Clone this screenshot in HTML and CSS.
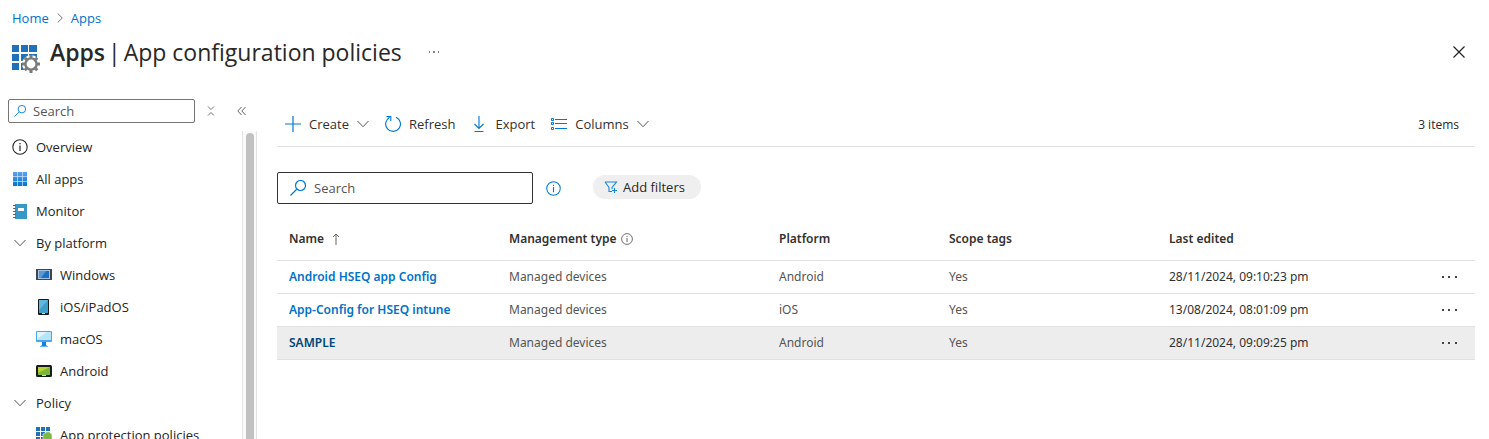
FILE: index.html
```html
<!DOCTYPE html>
<html lang="en">
<head>
<meta charset="utf-8">
<meta name="viewport" content="width=device-width, initial-scale=1">
<title>Apps | App configuration policies</title>
<link rel="stylesheet" href="styles.css">
</head>
<body>
<svg class="sprite" width="0" height="0" aria-hidden="true">
  <symbol id="chevron" viewBox="0 0 12 12"><path d="M.5 3 6 8.700 11.500 3" fill="none" stroke="currentColor"/></symbol>
  <symbol id="search" viewBox="0 0 16 16"><path d="M6.500 9.500.5 15.500M10.500.5a5 5 0 1 1 0 10 5 5 0 0 1 0-10z" fill="none" stroke="currentColor" stroke-width="1.200"/></symbol>
  <symbol id="info" viewBox="0 0 16 16"><circle cx="8" cy="8" r="7.200" fill="none" stroke="currentColor" stroke-width="1.100"/><path d="M8 6.500v5.500M8 4v1.200" fill="none" stroke="currentColor" stroke-width="1.200"/></symbol>
  <symbol id="dots" viewBox="0 0 16 4"><path d="M1 1h2v2H1zM7 1h2v2H7zM14 1h2v2h-2z" fill="currentColor"/></symbol>
</svg>

<header class="header">
  <nav class="breadcrumb" aria-label="Breadcrumb">
    <a href="#">Home</a>
    <svg class="crumb-sep" viewBox="0 0 6 10" aria-hidden="true"><path d="M.7.5 5.300 5 .7 9.500" fill="none" stroke="currentColor"/></svg>
    <a href="#">Apps</a>
  </nav>
  <div class="titlebar">
    <svg class="title-icon" viewBox="0 0 28 28" aria-hidden="true">
      <path fill="#1f72b8" d="M0 0h7v7H0zM9 0h7v7H9zM17 0h8v7h-8zM0 9h7v7H0zM9 9h7v7H9zM17 9h8v7h-8zM0 18h7v7H0zM9 18h7v7H9z"/>
      <circle cx="19" cy="19" r="9" fill="#fff"/>
      <circle cx="19" cy="19" r="5.600" fill="#fff" stroke="#7b7b7b" stroke-width="2.400"/>
      <g stroke="#7b7b7b" stroke-width="3"><path d="M19 10v3M19 25v3M10 19h3M25 19h3M12.700 12.700l2.100 2.100M23.200 23.200l2.100 2.100M25.300 12.700l-2.100 2.100M14.800 23.200l-2.100 2.100"/></g>
    </svg>
    <h1 class="title"><b>Apps</b> <span>|</span> <span>App configuration policies</span></h1>
    <button class="icon-button more-title" aria-label="More"><svg class="dots-small" viewBox="0 0 12 4"><path d="M1 1h1v2H1zM5 1h2v2H5zM10 1h1v2h-1z" fill="#888"/></svg></button>
    <button class="icon-button close" aria-label="Close"><svg viewBox="0 0 12 12"><path d="m.5.500 11 11m0-11-11 11" stroke="#222" stroke-width="1.200"/></svg></button>
  </div>
</header>

<div class="layout">
  <aside class="sidebar">
    <div class="side-tools">
      <div class="side-search"><svg class="side-search-icon" aria-hidden="true"><use href="#search"/></svg><input type="text" placeholder="Search" aria-label="Search menu"></div>
      <button class="icon-button collapse" aria-label="Collapse groups"><svg class="collapse-icon" viewBox="0 0 8 10"><path d="m1 .5 3 3 3-3M1 9.500l3-3 3 3" fill="none" stroke="#777"/></svg></button>
      <button class="icon-button collapse" aria-label="Hide menu"><svg class="hide-icon" viewBox="0 0 10 10"><path d="M4.500 1 .8 5l3.700 4M8.500 1 4.800 5l3.700 4" fill="none" stroke="#666"/></svg></button>
    </div>
    <div class="side-scroll">
      <nav class="menu" aria-label="Apps menu">
        <a class="item" href="#"><svg aria-hidden="true"><use href="#info"/></svg>Overview</a>
        <a class="item" href="#"><svg viewBox="0 0 16 16" aria-hidden="true"><defs><linearGradient id="tiles" x1="0" y1="0" x2="0" y2="1"><stop stop-color="#5ea0ef"/><stop offset="1" stop-color="#0078d4"/></linearGradient></defs><path fill="url(#tiles)" d="M1 1h14v14H1z"/><path d="M5.500 1v14M10.500 1v14M1 5.500h14M1 10.500h14" stroke="#d4e6fa" stroke-width=".7"/></svg>All apps</a>
        <a class="item" href="#"><svg viewBox="0 0 16 16" aria-hidden="true"><path fill="#3999c6" d="M3 1h12v15H3z"/><path d="M1 2.500h3M1 5.500h3M1 8.500h3M1 11.500h3M1 14.500h3" stroke="#666"/><path fill="#fff" d="M6 5h6v3H6z"/></svg>Monitor</a>
        <button class="item group"><svg aria-hidden="true"><use href="#chevron"/></svg>By platform</button>
        <a class="item child" href="#"><svg viewBox="0 0 16 16" aria-hidden="true"><path fill="#454547" d="M0 2h16v11H0z"/><path fill="#9fc5e8" d="M2 3h12v9H2z"/><path fill="#1f6fc0" d="M3 4h10v7H3z"/><path fill="#6097cf" d="M3 4h7l-5 7H3z"/></svg>Windows</a>
        <a class="item child" href="#"><svg viewBox="0 0 16 16" aria-hidden="true"><rect x="2" width="11" height="16" rx="1" fill="#16191c"/><path fill="#3ea0ca" d="M3 1h9v13H3z"/><path fill="#62b8dc" d="M3 1h9L3 11z"/><path fill="#ddd" d="M6 14h3v1H6z"/></svg>iOS/iPadOS</a>
        <a class="item child" href="#"><svg viewBox="0 0 16 16" aria-hidden="true"><path fill="#1580dc" d="M6 11h4v3l1 1H5l1-1z"/><path fill="#65baf2" d="M4 15h8v1H4z"/><rect width="16" height="11" y="0" rx="1" fill="#4ba7ed"/><path fill="#b7e6fb" d="M1 1h14v8H1z"/><path fill="#dff5ff" d="M1 1h10L1 8z"/></svg>macOS</a>
        <a class="item child" href="#"><svg viewBox="0 0 16 16" aria-hidden="true"><rect y="2" width="16" height="12" rx="1.500" fill="#171c1c"/><path fill="#79b63a" d="M2 4h12v8H2z"/><path fill="#b8d432" d="M2 4h12L2 10z"/><path fill="#ddd" d="M6 12h4v1H6z"/></svg>Android</a>
        <button class="item group"><svg aria-hidden="true"><use href="#chevron"/></svg>Policy</button>
        <a class="item child" href="#"><svg viewBox="0 0 16 16" aria-hidden="true"><path fill="#1f72b8" d="M0 0h4v4H0zM5 0h4v4H5zM10 0h4v4h-4zM0 5h4v4H0zM5 5h4v4H5zM10 5h4v4h-4zM0 10h4v4H0zM5 10h4v4H5z"/><path fill="#7fba42" stroke="#fff" stroke-width=".5" d="m7 7 5-2.500L16 7v5l-4 4-5-4z"/></svg>App protection policies</a>
      </nav>
      <div class="scrollbar" aria-hidden="true"><div class="thumb"></div></div>
    </div>
  </aside>

  <main class="content">
    <div class="toolbar">
      <button class="command create"><svg class="command-icon" viewBox="0 0 16 16" aria-hidden="true"><path d="M8 0v16M0 8h16" stroke="#0078d4" stroke-width="1.200"/></svg>Create<svg class="caret" aria-hidden="true"><use href="#chevron"/></svg></button>
      <button class="command refresh"><svg class="command-icon" viewBox="0 0 16 16" aria-hidden="true"><path d="M11 1.200A7.400 7.400 0 1 1 4.500 1.500M1.500.600h4.300v4.300" fill="none" stroke="#0078d4" stroke-width="1.100"/></svg>Refresh</button>
      <button class="command export"><svg class="command-icon" viewBox="0 0 16 16" aria-hidden="true"><path d="M8 0v12.500M3.500 8 8 12.500 12.500 8M3.500 15.500h9" fill="none" stroke="#0078d4" stroke-width="1.100"/></svg>Export</button>
      <button class="command"><svg class="command-icon" viewBox="0 0 16 16" aria-hidden="true"><path d="M4 3.500h12M4 7.500h12M4 12.500h12" stroke="#0078d4"/><path d="M.5 2.500h2v2h-2zM.5 6.500h2v2h-2zM.5 11.500h2v2h-2z" fill="none" stroke="#0078d4"/></svg>Columns<svg class="caret" aria-hidden="true"><use href="#chevron"/></svg></button>
      <span class="count">3 items</span>
    </div>

    <div class="filters">
      <div class="search"><svg class="search-icon" aria-hidden="true"><use href="#search"/></svg><input type="text" placeholder="Search" aria-label="Search policies"></div>
      <button class="icon-button info-button" aria-label="Search information"><svg aria-hidden="true"><use href="#info"/></svg></button>
      <button class="pill"><svg viewBox="0 0 14 14" aria-hidden="true"><path d="M1 2h11.500L8 7.500V9M1 2l4 5.500v4h3M10.500 8v5M8 10.500h5" fill="none" stroke="#1b87da" stroke-width="1.100"/></svg>Add filters</button>
    </div>

    <table class="table">
      <colgroup><col class="c-name"><col class="c-type"><col class="c-platform"><col class="c-scope"><col><col class="c-more"></colgroup>
      <thead>
        <tr><th><span class="heading">Name <svg class="sort" viewBox="0 0 8 12" aria-label="Sorted ascending"><path d="M4 12V1M1 4l3-3 3 3" fill="none" stroke="#666"/></svg></span></th><th><span class="heading type-heading">Management type <svg class="th-info" aria-hidden="true"><use href="#info"/></svg></span></th><th>Platform</th><th>Scope tags</th><th>Last edited</th><th aria-label="Actions"></th></tr>
      </thead>
      <tbody>
        <tr><td><a href="#">Android HSEQ app Config</a></td><td>Managed devices</td><td>Android</td><td>Yes</td><td class="date">28/11/2024, 09:10:23 pm</td><td><button class="icon-button row-more" aria-label="More actions"><svg><use href="#dots"/></svg></button></td></tr>
        <tr><td><a href="#">App-Config for HSEQ intune</a></td><td>Managed devices</td><td>iOS</td><td>Yes</td><td class="date">13/08/2024, 08:01:09 pm</td><td><button class="icon-button row-more" aria-label="More actions"><svg><use href="#dots"/></svg></button></td></tr>
        <tr class="active"><td><a href="#">SAMPLE</a></td><td>Managed devices</td><td>Android</td><td>Yes</td><td class="date">28/11/2024, 09:09:25 pm</td><td><button class="icon-button row-more" aria-label="More actions"><svg><use href="#dots"/></svg></button></td></tr>
      </tbody>
    </table>
  </main>
</div>
</body>
</html>
```
FILE: styles.css
```css
* { box-sizing: border-box; }
body {
  margin: 0;
  height: 100vh;
  display: flex;
  flex-direction: column;
  overflow: hidden;
  background: #fff;
  color: #292827;
  font: 13px/20px "Open Sans", "Noto Sans", sans-serif;
}
button, input { font: inherit; color: inherit; }
button { border: 0; padding: 0; background: none; cursor: pointer; }
a { color: #0072c9; text-decoration: none; }
svg { display: block; flex: none; }
.sprite { position: absolute; }
.icon-button { display: flex; align-items: center; justify-content: center; flex: none; }

.header { padding: 8px 24px 0 12px; }
.breadcrumb { display: flex; align-items: center; gap: 8px; }
.crumb-sep { width: 6px; height: 10px; color: #777; }
.titlebar { display: flex; align-items: center; height: 48px; }
.title-icon { width: 28px; height: 28px; margin: 14px 10px 0 0; }
.title { display: flex; gap: 3px; margin: 0; font-size: 23px; line-height: 32px; font-weight: 400; }
.title b { font-weight: 600; }
.more-title { width: 24px; height: 24px; margin-left: 20px; }
.dots-small { width: 12px; height: 4px; }
.close { width: 12px; height: 24px; margin-left: auto; }
.close svg { width: 12px; height: 12px; }

.layout { flex: 1; min-height: 0; display: flex; gap: 20px; padding: 23px 14px 0 0; }
.sidebar { width: 257px; flex: none; display: flex; flex-direction: column; min-height: 0; }
.side-tools { display: flex; align-items: center; padding-left: 8px; }
.side-search {
  display: flex; align-items: center; gap: 7px;
  width: 187px; height: 24px; padding: 0 5px;
  border: 1px solid #767676; border-radius: 2px;
}
.side-search-icon { width: 12px; height: 12px; color: #0078d4; }
.side-search input, .search input { flex: 1; min-width: 0; border: 0; padding: 0; outline: 0; background: none; }
input::placeholder { color: #555; opacity: 1; }
.collapse { width: 31px; height: 24px; }
.collapse-icon { width: 8px; height: 10px; }
.hide-icon { width: 10px; height: 10px; }
.side-scroll { flex: 1; min-height: 0; display: flex; margin-top: 8px; overflow: hidden; }
.menu { flex: 1; display: flex; flex-direction: column; }
.item {
  display: flex; align-items: center; gap: 8px; flex: none;
  height: 32px; padding-left: 12px;
  color: #252423; text-align: left;
}
.item svg { width: 16px; height: 16px; }
.group svg { padding: 2px; color: #555; }
.child { padding-left: 36px; }
.scrollbar { width: 15px; padding: 2px 3px 0; border: solid #e4e4e4; border-width: 0 1px; background: #fafafa; }
.thumb { width: 8px; height: 400px; border-radius: 4px; background: #c1c1c1; }

.content { flex: 1; min-width: 0; }
.toolbar { display: flex; align-items: center; height: 45px; padding: 0 16px 0 8px; margin-top: 3px; border-bottom: 1px solid #e1e1e1; }
.command { display: flex; align-items: center; gap: 8px; color: #323130; font-size: 13px; margin-right: 16px; }
.command-icon { width: 16px; height: 16px; }
.caret { width: 12px; height: 12px; color: #555; }
.count { margin-left: auto; padding-top: 2px; font-size: 12px; }

.filters { display: flex; align-items: center; padding-top: 25px; }
.search {
  display: flex; align-items: center; gap: 8px;
  width: 256px; height: 32px; padding: 0 12px;
  border: 1px solid #323130; border-radius: 2px;
}
.search-icon { width: 16px; height: 16px; color: #0078d4; }
.info-button { width: 16px; margin: 0 32px 0 12px; color: #0078d4; }
.info-button svg { width: 15px; height: 15px; }
.pill { display: flex; align-items: center; gap: 5px; height: 24px; padding: 0 16px 0 11px; margin-bottom: 2px; border-radius: 12px; background: #efefef; }
.pill svg { width: 14px; height: 14px; }

.table { width: 100%; margin-top: 12px; table-layout: fixed; border-collapse: collapse; font-family: "Noto Sans", sans-serif; font-size: 12px; }
.c-name { width: 220px; }
.c-type { width: 270px; }
.c-platform { width: 170px; }
.c-scope { width: 220px; }
.c-more { width: 46px; }
th, td { padding: 0 0 0 12px; text-align: left; white-space: nowrap; border-bottom: 1px solid #e1e1e1; }
th { height: 44px; padding-top: 2px; color: #323130; font-weight: 600; }
td { height: 33px; color: #555; }
td a { font-weight: 600; }
.date { color: #323130; }
.heading { display: flex; align-items: center; gap: 8px; }
.type-heading { gap: 4px; }
.sort { width: 8px; height: 12px; }
.th-info { width: 12px; height: 12px; color: #555; }
.row-more { height: 24px; color: #444; }
.row-more svg { width: 16px; height: 4px; }
.active { background: #ededed; }
.active a { color: #004578; }
```
